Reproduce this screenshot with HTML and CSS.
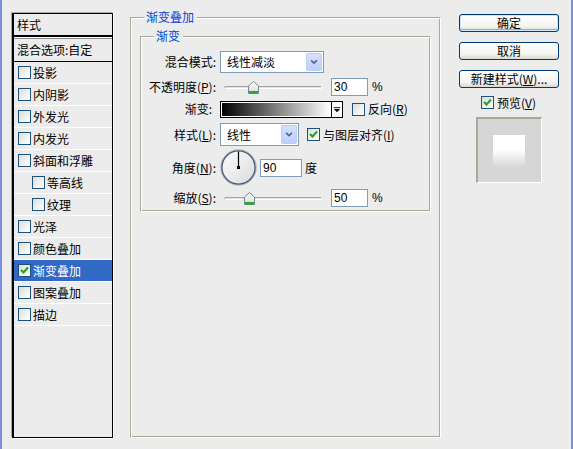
FILE: index.html
```html
<!DOCTYPE html>
<html>
<head>
<meta charset="utf-8">
<title>图层样式</title>
<link rel="stylesheet" href="styles.css">
</head>
<body>
<div class="dialog">
  <div class="edge"></div>

  <div class="styles-list">
    <div class="list-head">样式</div>
    <div class="list-blend">混合选项:自定</div>
    <div class="item"><span class="cb"></span>投影</div>
    <div class="item"><span class="cb"></span>内阴影</div>
    <div class="item"><span class="cb"></span>外发光</div>
    <div class="item"><span class="cb"></span>内发光</div>
    <div class="item"><span class="cb"></span>斜面和浮雕</div>
    <div class="item sub"><span class="cb"></span>等高线</div>
    <div class="item sub"><span class="cb"></span>纹理</div>
    <div class="item"><span class="cb"></span>光泽</div>
    <div class="item"><span class="cb"></span>颜色叠加</div>
    <div class="item selected"><span class="cb"><svg class="tick" viewBox="0 0 11 11"><path d="M2 5 L4.5 7.5 L9 2.5" /></svg></span>渐变叠加</div>
    <div class="item"><span class="cb"></span>图案叠加</div>
    <div class="item"><span class="cb"></span>描边</div>
  </div>

  <fieldset class="group outer">
    <legend>渐变叠加</legend>
    <fieldset class="group inner">
      <legend>渐变</legend>

      <div class="row r-blend">
        <span class="lbl">混合模式:</span>
        <div class="select sel-blend">
          <span class="sel-text">线性减淡</span>
          <span class="drop"><svg viewBox="0 0 16 20"><path d="M4.5 8 L8 11.5 L11.5 8" /></svg></span>
        </div>
      </div>

      <div class="row r-opacity">
        <span class="lbl">不透明度(<u>P</u>):</span>
        <div class="slider">
          <div class="track"></div>
          <svg class="thumb" style="left:28px" viewBox="0 0 11 13"><defs><linearGradient id="tg1" x1="0" y1="0" x2="0" y2="1"><stop offset="0" stop-color="#ffffff"/><stop offset="1" stop-color="#d8d8d8"/></linearGradient></defs><path d="M5.5 0.5 L10.5 5 V12.5 H0.5 V5 Z" fill="url(#tg1)" stroke="#7b8796"/><rect x="1" y="10" width="9" height="2.5" fill="#22b022"/></svg>
        </div>
        <div class="num">30</div>
        <span class="unit">%</span>
      </div>

      <div class="row r-grad">
        <span class="lbl lbl-short">渐变:</span>
        <div class="gradbox">
          <div class="grad"></div>
          <div class="grad-drop"><svg viewBox="0 0 11 15"><rect x="2" y="5" width="7" height="1" fill="#000"/><path d="M2 7 H9 L5.5 10.5 Z" fill="#000"/></svg></div>
        </div>
        <span class="cb cb-rev"></span>
        <span class="cb-text">反向(<u>R</u>)</span>
      </div>

      <div class="row r-style">
        <span class="lbl">样式(<u>L</u>):</span>
        <div class="select sel-style">
          <span class="sel-text">线性</span>
          <span class="drop"><svg viewBox="0 0 16 21"><path d="M4.5 8.5 L8 12 L11.5 8.5" /></svg></span>
        </div>
        <span class="cb cb-align"><svg class="tick" viewBox="0 0 11 11"><path d="M2 5 L4.5 7.5 L9 2.5" /></svg></span>
        <span class="cb-text">与图层对齐(<u>I</u>)</span>
      </div>

      <div class="row r-angle">
        <span class="lbl">角度(<u>N</u>):</span>
        <svg class="dial" viewBox="0 0 37 37">
          <defs><linearGradient id="dg" x1="0" y1="0" x2="1" y2="1"><stop offset="0" stop-color="#fbfbfb"/><stop offset="1" stop-color="#dcdcdc"/></linearGradient></defs>
          <circle cx="18.5" cy="18.5" r="17.8" fill="none" stroke="#b4bac4" stroke-width="1"/>
          <circle cx="18.5" cy="18.5" r="16.6" fill="url(#dg)" stroke="#4a5a74" stroke-width="1.4"/>
          <line x1="18.5" y1="19" x2="18.5" y2="2.5" stroke="#000" stroke-width="1.2"/>
          <rect x="17" y="17" width="3" height="3" fill="#000"/>
        </svg>
        <div class="num num-angle">90</div>
        <span class="unit unit-deg">度</span>
      </div>

      <div class="row r-scale">
        <span class="lbl">缩放(<u>S</u>):</span>
        <div class="slider">
          <div class="track"></div>
          <svg class="thumb" style="left:24px" viewBox="0 0 11 13"><defs><linearGradient id="tg2" x1="0" y1="0" x2="0" y2="1"><stop offset="0" stop-color="#ffffff"/><stop offset="1" stop-color="#d8d8d8"/></linearGradient></defs><path d="M5.5 0.5 L10.5 5 V12.5 H0.5 V5 Z" fill="url(#tg2)" stroke="#7b8796"/><rect x="1" y="10" width="9" height="2.5" fill="#22b022"/></svg>
        </div>
        <div class="num">50</div>
        <span class="unit">%</span>
      </div>
    </fieldset>
  </fieldset>

  <div class="side">
    <div class="btn btn-default">确定</div>
    <div class="btn">取消</div>
    <div class="btn">新建样式(<u>W</u>)...</div>
    <div class="preview-row">
      <span class="cb"><svg class="tick" viewBox="0 0 11 11"><path d="M2 5 L4.5 7.5 L9 2.5" /></svg></span>
      <span class="cb-text">预览(<u>V</u>)</span>
    </div>
    <div class="preview">
      <div class="preview-swatch"></div>
    </div>
  </div>

  <div class="edge edge-r"></div>
</div>
</body>
</html>
```

FILE: styles.css
```css
* { box-sizing: border-box; }

html, body {
  margin: 0;
  padding: 0;
  background: #ececec;
}

body {
  font-family: "Noto Sans CJK SC", "Noto Sans", "DejaVu Sans", sans-serif;
  font-size: 12px;
  line-height: 14px;
  color: #000;
}

u { text-decoration: underline; text-underline-offset: 1px; }

.dialog {
  display: flex;
  align-items: flex-start;
  width: 573px;
  height: 449px;
  overflow: hidden;
}

.edge {
  width: 2px;
  height: 449px;
  background: #7b8ee0;
  flex: none;
}
.edge-r { margin-left: auto; }

/* ---------- left style list ---------- */
.styles-list {
  flex: none;
  margin-left: 10px;
  margin-top: 13px;
  width: 101px;
  height: 425px;
  border: 1px solid #000;
  border-left-width: 2px;
  box-shadow: -1px -1px 0 #a8a79c, 1px 1px 0 #fff;
  background: #ececec;
}

.list-head {
  height: 23px;
  padding-left: 3px;
  display: flex;
  align-items: center;
  border-bottom: 2px solid #000;
  margin-bottom: 1px;
  box-shadow: 0 1px 0 #fff;
}

.list-blend {
  height: 24px;
  padding-left: 3px;
  display: flex;
  align-items: center;
  border-top: 1px solid #8f8f8f;
  border-bottom: 1px solid #000;
}

.item {
  height: 22px;
  display: flex;
  align-items: center;
  padding-left: 4px;
  border-bottom: 1px solid #fff;
}
.item.sub { padding-left: 18px; }
.item .cb { margin-right: 2px; }
.item.selected {
  background: #316ac5;
  color: #fff;
}

/* checkbox */
.cb {
  flex: none;
  display: inline-flex;
  align-items: center;
  justify-content: center;
  width: 13px;
  height: 13px;
  border: 1px solid #1c5180;
  background: linear-gradient(135deg, #dcdcd7 0%, #f6f6f4 70%, #ffffff 100%);
}
.tick {
  width: 11px;
  height: 11px;
}
.tick path {
  fill: none;
  stroke: #21a121;
  stroke-width: 2;
}
.cb-text { margin-left: 3px; white-space: nowrap; }

/* ---------- group boxes ---------- */
.group {
  margin: 0;
  min-width: 0;
  border: 1px solid;
  border-color: #aca899 #fff #fff #aca899;
  box-shadow: inset 1px 1px 0 #fff, inset -1px -1px 0 #aca899;
  padding: 0;
}
.group > legend {
  padding: 0 3px 0 2px;
  color: #0046d5;
  line-height: 14px;
  background: #ececec;
}

.outer {
  flex: none;
  margin-left: 17px;
  margin-top: 10px;
  width: 311px;
  height: 428px;
  padding: 5px 10px 0 9px;
}
.outer > legend { margin-left: 4px; }

.inner {
  width: 291px;
  height: 183px;
  padding: 8px 0 0 5px;
}
.inner > legend { margin-left: 8px; }

.row {
  display: flex;
  align-items: center;
}
.r-blend { height: 22px; }
.r-opacity { height: 18px; margin-top: 5px; }
.r-grad { height: 18px; margin-top: 4px; }
.r-style { height: 23px; margin-top: 5px; }
.r-angle { height: 37px; margin-top: 3px; }
.r-scale { height: 18px; margin-top: 3px; }

.lbl {
  flex: none;
  width: 70px;
  margin-right: 4px;
  text-align: right;
  white-space: nowrap;
}
.lbl-short { padding-right: 4px; }

/* select */
.select {
  flex: none;
  display: flex;
  align-items: center;
  justify-content: space-between;
  border: 1px solid #7f9db9;
  background: #fff;
  padding: 1px;
}
.sel-blend { width: 104px; height: 22px; }
.sel-style { width: 79px; height: 23px; }
.sel-text { padding-left: 5px; white-space: nowrap; }
.drop {
  width: 16px;
  height: 100%;
  display: flex;
  border: 1px solid #b9cdf5;
  border-radius: 2px;
  background: linear-gradient(#d4e1fd, #bccffb);
}
.drop svg { width: 100%; height: 100%; }
.drop path {
  fill: none;
  stroke: #4d6185;
  stroke-width: 2;
}

/* slider */
.slider {
  flex: none;
  position: relative;
  width: 104px;
  height: 18px;
}
.track {
  position: absolute;
  left: 4px;
  right: 2px;
  top: 8px;
  height: 3px;
  border-radius: 2px;
  border-top: 1px solid #a4a4a4;
  border-left: 1px solid #b8b8b8;
  border-bottom: 1px solid #fff;
  border-right: 1px solid #fff;
  background: #e2e2e2;
}
.thumb {
  position: absolute;
  top: 3px;
  width: 11px;
  height: 13px;
}

.num {
  flex: none;
  width: 37px;
  height: 18px;
  margin-left: 7px;
  border: 1px solid #7f9db9;
  background: #fff;
  padding-left: 2px;
  font-family: "Liberation Sans", "DejaVu Sans", sans-serif;
  font-size: 12px;
  line-height: 16px;
}
.num-angle { width: 42px; margin-left: 3px; }
.unit {
  margin-left: 4px;
  font-family: "Liberation Sans", "DejaVu Sans", sans-serif;
}
.unit-deg { font-family: inherit; margin-left: 3px; }

/* gradient picker */
.gradbox {
  flex: none;
  display: flex;
  width: 123px;
  height: 17px;
  border: 1px solid #000;
  background: #fff;
}
.grad {
  flex: 1;
  margin: 1px;
  background: linear-gradient(to right, #000 0%, #ffffff 100%);
}
.grad-drop {
  width: 11px;
  border-left: 1px solid #000;
  display: flex;
}
.grad-drop svg { width: 100%; height: 100%; }
.cb-rev { margin-left: 9px; }
.cb-align { margin-left: 8px; }
.r-grad .cb-text { margin-left: 3px; }

.dial {
  flex: none;
  width: 37px;
  height: 37px;
}

/* ---------- right column ---------- */
.side {
  flex: none;
  margin-left: 18px;
  margin-top: 14px;
  width: 100px;
  display: flex;
  flex-direction: column;
  align-items: center;
}

.btn {
  width: 100px;
  height: 18px;
  margin-bottom: 10px;
  border: 1px solid #003c74;
  border-radius: 3px;
  background: linear-gradient(#ffffff 0%, #f4f4f0 70%, #dcd8cf 100%);
  display: flex;
  align-items: center;
  justify-content: center;
  line-height: 14px;
  white-space: nowrap;
}
.btn-default {
  box-shadow: inset 0 0 0 1px #cde5ff, inset 0 -1px 0 1px #8bb0e8;
}

.preview-row {
  display: flex;
  align-items: center;
  height: 13px;
  margin-top: -2px;
  margin-left: -1px;
}

.preview {
  margin-top: 8px;
  width: 66px;
  height: 66px;
  border-top: 2px solid #aca899;
  border-left: 2px solid #aca899;
  border-right: 1px solid #fff;
  border-bottom: 1px solid #fff;
  background: #d6d6d6;
  display: flex;
  align-items: center;
  justify-content: center;
  margin-left: -1px;
}
.preview-swatch {
  width: 32px;
  height: 32px;
  background: linear-gradient(#ffffff 0%, #ffffff 45%, #f0f0f0 65%, #d8d8d8 100%);
}
```
